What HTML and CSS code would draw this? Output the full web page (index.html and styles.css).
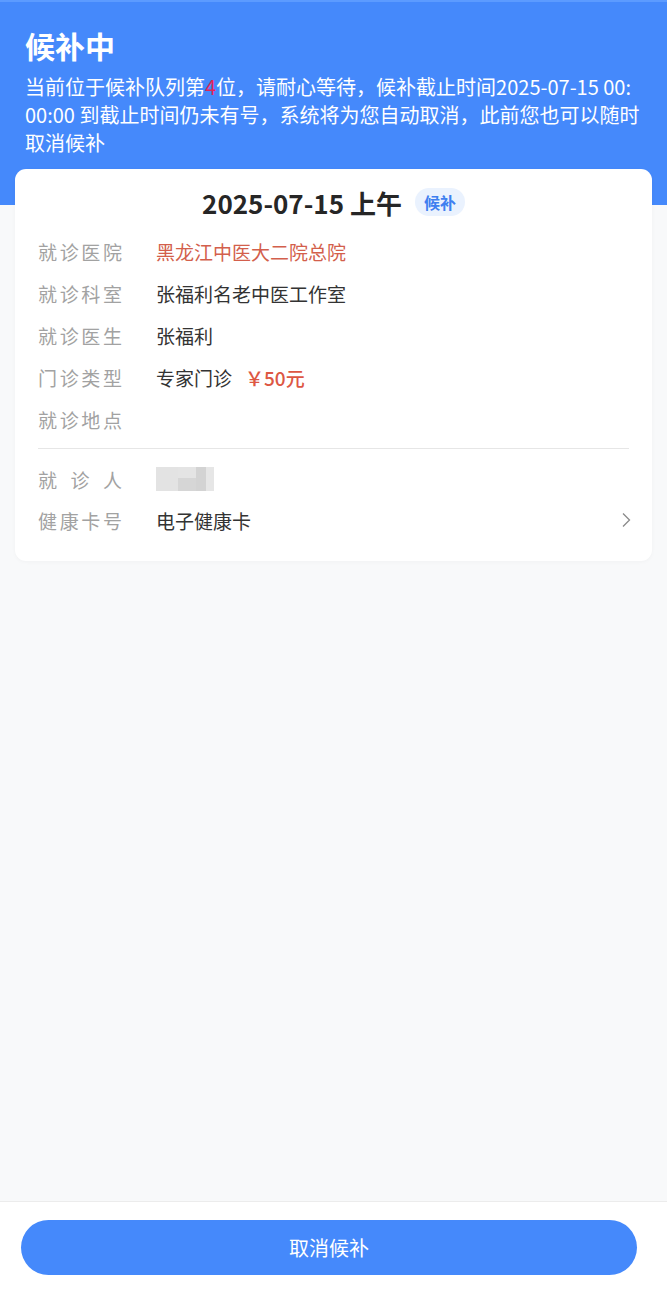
FILE: index.html
```html
<!DOCTYPE html>
<html lang="zh-CN">
<head>
<meta charset="utf-8">
<title>候补中</title>
<link rel="stylesheet" href="styles.css">
</head>
<body>
<div class="page">
  <main class="main">
    <header class="header">
      <h1 class="title">候补中</h1>
      <p class="desc">当前位于候补队列第<span class="rank">4</span>位，请耐心等待，候补截止时间2025-07-15 00:00:00 到截止时间仍未有号，系统将为您自动取消，此前您也可以随时取消候补</p>
    </header>
    <section class="card">
      <div class="date-row">
        <span class="date">2025-07-15 上午</span>
        <span class="badge">候补</span>
      </div>
      <div class="rows">
        <div class="row"><span class="label">就诊医院</span><span class="value red">黑龙江中医大二院总院</span></div>
        <div class="row"><span class="label">就诊科室</span><span class="value">张福利名老中医工作室</span></div>
        <div class="row"><span class="label">就诊医生</span><span class="value">张福利</span></div>
        <div class="row"><span class="label">门诊类型</span><span class="value">专家门诊<span class="price">￥50元</span></span></div>
        <div class="row"><span class="label">就诊地点</span><span class="value"></span></div>
      </div>
      <div class="divider"></div>
      <div class="rows">
        <div class="row short"><span class="label">就诊人</span><span class="value"><span class="blur"><i class="b1"></i><i class="b2"></i><i class="b3"></i><i class="b4"></i></span></span></div>
        <div class="row short"><span class="label">健康卡号</span><span class="value grow">电子健康卡</span>
          <svg class="chev" width="10" height="16" viewBox="0 0 10 16"><path d="M2 1.5 L8.5 8 L2 14.5" fill="none" stroke="#8a8a8a" stroke-width="1.3"/></svg>
        </div>
      </div>
    </section>
  </main>
  <footer class="bottom">
    <button class="btn">取消候补</button>
  </footer>
</div>
</body>
</html>
```

FILE: styles.css
```css
* { box-sizing: border-box; }
html, body { margin: 0; padding: 0; }
body {
  font-family: "Noto Sans CJK SC", "Noto Sans", sans-serif;
  background: #f8f9fa;
  color: #333;
}
.page {
  min-height: 100vh;
  display: flex;
  flex-direction: column;
}
.main { flex: 1; }
.header {
  background: #4589fb;
  border-top: 2px solid #5c9bff;
  padding: 23px 25px 48px;
  color: #fff;
}
.title {
  margin: 0;
  font-size: 30px;
  line-height: 40px;
  font-weight: 700;
}
.desc {
  margin: 8px 0 0;
  font-size: 20px;
  line-height: 28px;
  word-break: break-all;
}
.rank { color: #e0245a; }
.card {
  margin: -36px 15px 0;
  background: #fff;
  border-radius: 11px;
  padding: 16px 23px 20px;
  box-shadow: 0 1px 4px rgba(0,0,0,0.03);
}
.date-row {
  display: flex;
  justify-content: center;
  align-items: center;
  gap: 13px;
  height: 34px;
  margin-bottom: 12px;
}
.date {
  font-size: 26px;
  font-weight: 700;
  color: #262626;
}
.badge {
  font-size: 16px;
  font-weight: 700;
  color: #3f7ff0;
  background: #eaf2fe;
  border-radius: 14px;
  padding: 0 9px;
  line-height: 28px;
}
.row {
  display: flex;
  align-items: center;
  height: 41.8px;
  font-size: 19px;
}
.row.short { height: 41px; }
.label {
  width: 84px;
  color: #a2a2a2;
  text-align: justify;
  text-align-last: justify;
  margin-right: 34px;
  flex-shrink: 0;
}
.value { color: #333; display: flex; align-items: center; }
.value.grow { flex: 1; }
.red { color: #d35f4c; }
.price {
  color: #dd5743;
  margin-left: 13px;
  font-weight: 500;
}
.divider {
  height: 1px;
  background: #e6e6e6;
  margin: 8px 0 10px;
}
.blur {
  display: inline-grid;
  grid-template-columns: 22px 18px 10px 8px;
  height: 24px;
  width: 58px;
}
.blur i { display: block; }
.b1 { background: #e3e3e3; }
.b2 { background: linear-gradient(#e4e4e4 0 45%, #d6d6d6 45% 100%); }
.b3 { background: #d3d3d3; }
.b4 { background: #e6e6e6; }
.chev { flex-shrink: 0; margin-right: -2px; }
.bottom {
  background: #fff;
  border-top: 1px solid #ececec;
  padding: 18px 30px 16px 21px;
}
.btn {
  display: block;
  width: 616px;
  height: 55px;
  border: none;
  border-radius: 28px;
  background: #4589fb;
  color: #fff;
  font-family: "Noto Sans CJK SC", sans-serif;
  font-size: 20px;
}
```
